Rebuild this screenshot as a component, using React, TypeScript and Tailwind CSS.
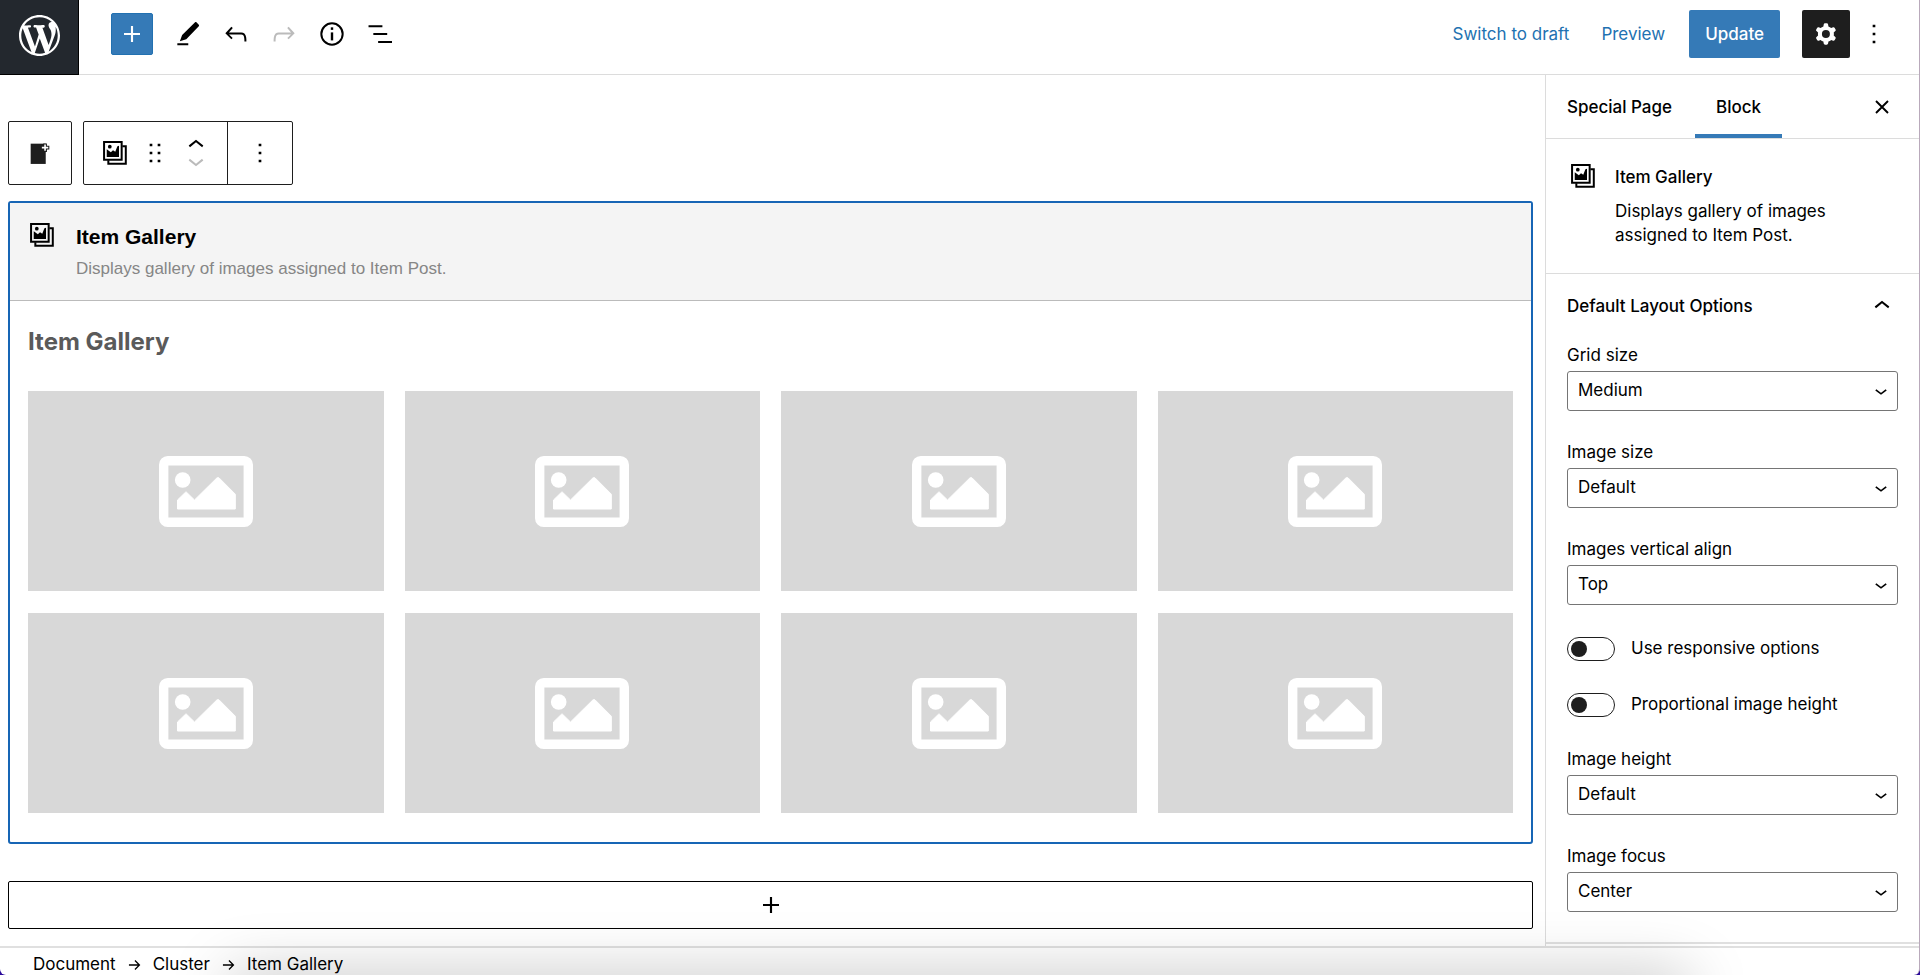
import type { ReactNode } from "react";

type IconProps = { className?: string };

const GalleryIcon = ({ className = "w-8 h-8" }: IconProps) => (
  <svg viewBox="0 0 24 24" className={className} fill="none" aria-hidden="true">
    <path d="M3.8 3.8h13.2v13.2H3.8z" stroke="currentColor" strokeWidth="1.5" />
    <path d="M17.5 7h2.6v13.1H7v-2.6" stroke="currentColor" strokeWidth="1.5" />
    <path d="M5.8 9.2v5.8h9.2V6.6l-1.2.4-1.6 4-1.7-1-1.6 1.5z" fill="currentColor" />
    <circle cx="8.1" cy="7.3" r="1.4" fill="currentColor" />
  </svg>
);

const PlusIcon = ({ className = "w-8 h-8" }: IconProps) => (
  <svg viewBox="0 0 24 24" className={className} fill="currentColor" aria-hidden="true">
    <path d="M18 11.2h-5.2V6h-1.6v5.2H6v1.6h5.2V18h1.6v-5.2H18z" />
  </svg>
);

const ChevronIcon = ({ className = "w-8 h-8" }: IconProps) => (
  <svg viewBox="0 0 24 24" className={className} fill="currentColor" aria-hidden="true">
    <path d="M6.5 12.4 12 8l5.5 4.4-.9 1.2L12 10l-4.5 3.6z" />
  </svg>
);

const MoreIcon = () => (
  <svg viewBox="0 0 24 24" className="w-8 h-8" fill="currentColor" aria-hidden="true">
    <path d="M13 19h-2v-2h2v2zm0-6h-2v-2h2v2zm0-6h-2V5h2v2z" />
  </svg>
);

const UndoIcon = ({ className = "w-8 h-8" }: IconProps) => (
  <svg viewBox="0 0 24 24" className={className} fill="currentColor" aria-hidden="true">
    <path d="M18.3 11.7c-.6-.6-1.4-.9-2.3-.9H6.7l2.9-3.3-1.1-1-4.5 5L8.5 16l1-1-2.7-2.7H16c.5 0 .9.2 1.3.5 1 1 1 3.4 1 4.5v.3h1.5v-.2c0-1.5 0-4.3-1.5-5.7z" />
  </svg>
);

const PlaceholderIcon = () => (
  <svg viewBox="0 0 94 71" className="w-[94px] h-[71px]" fill="none" aria-hidden="true">
    <rect x="4.7" y="4.7" width="84.6" height="61.6" rx="4" stroke="white" strokeWidth="9.4" />
    <circle cx="23.7" cy="24" r="7.8" fill="white" />
    <path
      d="M18.5 53V44l8-7.8h1l8 7.8L58 21.8h2l16.3 16.4V53z"
      fill="white"
      stroke="white"
      strokeWidth="1"
      strokeLinejoin="round"
    />
  </svg>
);

const ArrowIcon = () => (
  <svg viewBox="0 0 14 12" className="w-[13px] h-3" fill="none" stroke="currentColor" strokeWidth="1.4" aria-hidden="true">
    <path d="M1 6h11M7.5 1.2 12.3 6l-4.8 4.8" />
  </svg>
);

const tools: { label: string; icon: ReactNode; disabled?: boolean }[] = [
  {
    label: "Tools",
    icon: (
      <svg viewBox="0 0 24 24" className="w-8 h-8" fill="currentColor">
        <path d="m20.1 5.1-1.8-1.9c-.3-.3-.7-.3-1 0L7.6 12.7 5.9 17.5l4.8-1.6 9.4-9.8c.3-.3.3-.7 0-1zM4 18.9h8.2v1.5H4z" />
      </svg>
    ),
  },
  { label: "Undo", icon: <UndoIcon /> },
  { label: "Redo", icon: <UndoIcon className="w-8 h-8 -scale-x-100" />, disabled: true },
  {
    label: "Details",
    icon: (
      <svg viewBox="0 0 24 24" className="w-8 h-8" fill="none" stroke="currentColor">
        <circle cx="12" cy="12" r="8" strokeWidth="1.5" />
        <path d="M12 10.8v6" strokeWidth="1.8" />
        <path d="M12 7v1.9" strokeWidth="1.8" />
      </svg>
    ),
  },
  {
    label: "List view",
    icon: (
      <svg viewBox="0 0 24 24" className="w-8 h-8" fill="currentColor">
        <path d="M3.4 5.4h10.4v1.5H3.4zM7 11.2h10.4v1.5H7zM10.6 17.2h10.4v1.5H10.6z" />
      </svg>
    ),
  },
];

function SelectField({ id, label, value }: { id: string; label: string; value: string }) {
  return (
    <div>
      <label htmlFor={id} className="block leading-6 mb-1">
        {label}
      </label>
      <div className="relative">
        <select
          id={id}
          defaultValue={value}
          className="appearance-none w-full h-10 pl-[10px] pr-9 border border-[#757575] rounded-[3px] bg-white"
        >
          <option>{value}</option>
        </select>
        <svg
          viewBox="0 0 12 6"
          className="absolute right-[11px] top-[18px] w-3 h-[6px] pointer-events-none"
          fill="none"
          stroke="currentColor"
          strokeWidth="1.7"
          aria-hidden="true"
        >
          <path d="M.8.8 6 4.8 11.2.8" />
        </svg>
      </div>
    </div>
  );
}

function Toggle({ label }: { label: string }) {
  return (
    <label className="flex items-center gap-4 h-6">
      <span className="relative flex w-12 h-6">
        <input
          type="checkbox"
          className="peer appearance-none w-12 h-6 rounded-full border border-[#1e1e1e] bg-white"
        />
        <span className="absolute left-1 top-1 w-4 h-4 rounded-full bg-[#1e1e1e] peer-checked:translate-x-6" />
      </span>
      {label}
    </label>
  );
}

export default function App() {
  return (
    <div className="h-screen bg-[#2a0a9a] text-[17px] text-black font-['Inter',sans-serif] overflow-hidden">
      <div className="relative h-full flex flex-col bg-white border-r border-[#b9a9bb] rounded-b-md overflow-hidden">
        {/* Top bar */}
        <header className="flex items-stretch h-[75px] shrink-0 border-b border-[#dcdcdc]">
          <a
            href="#"
            aria-label="View pages"
            className="flex items-center justify-center w-[79px] h-[75px] pb-1 bg-[#23282e] border-b border-r border-black text-white"
          >
            <svg viewBox="0 0 20 20" className="w-[41px] h-[41px]" fill="currentColor">
              <path d="M20 10c0-5.51-4.49-10-10-10C4.48 0 0 4.49 0 10c0 5.52 4.48 10 10 10 5.51 0 10-4.48 10-10zM7.78 15.37L4.37 6.22c.55-.02 1.17-.08 1.17-.08.5-.06.44-1.13-.06-1.11 0 0-1.45.11-2.37.11-.18 0-.37 0-.58-.01C4.12 2.69 6.87 1.11 10 1.11c2.33 0 4.45.87 6.05 2.34-.68-.11-1.65.39-1.65 1.58 0 .74.45 1.36.9 2.1.35.61.55 1.36.55 2.46 0 1.49-1.4 5-1.4 5l-3.03-8.37c.54-.02.82-.17.82-.17.5-.05.44-1.25-.06-1.22 0 0-1.44.12-2.38.12-.87 0-2.33-.12-2.33-.12-.5-.03-.56 1.2-.06 1.22l.92.08 1.26 3.41zM17.41 10c.24-.64.74-1.87.43-4.25.7 1.29 1.05 2.71 1.05 4.25 0 3.29-1.73 6.24-4.4 7.78.97-2.59 1.94-5.2 2.92-7.78zM6.1 18.09C3.12 16.65 1.11 13.53 1.11 10c0-1.3.23-2.48.72-3.59C3.25 10.3 4.67 14.2 6.1 18.09zm4.03-6.63l2.58 6.98c-.86.29-1.76.45-2.71.45-.79 0-1.57-.11-2.29-.33.81-2.38 1.62-4.74 2.42-7.1z" />
            </svg>
          </a>
          <div className="flex items-center h-[68px] pl-8">
            <button
              aria-label="Add block"
              className="flex items-center justify-center w-[42px] h-[42px] mr-[11px] rounded-xs bg-[#357ab7] border border-[#2271b1] text-white"
            >
              <PlusIcon />
            </button>
            {tools.map(({ label, icon, disabled }) => (
              <button
                key={label}
                aria-label={label}
                disabled={disabled}
                className="flex items-center justify-center w-12 h-12 disabled:text-[#bbb]"
              >
                {icon}
              </button>
            ))}
          </div>
          <div className="flex items-center h-[68px] ml-auto pr-[29px]">
            <button className="mr-8 pt-[2px] text-[#2271b1]">Switch to draft</button>
            <button className="mr-6 pt-[2px] text-[#2271b1]">Preview</button>
            <button className="h-12 px-4 pt-[2px] mr-[22px] rounded-xs bg-[#357ab7] text-white font-medium">
              Update
            </button>
            <button
              aria-label="Settings"
              className="flex items-center justify-center w-12 h-12 mr-2 rounded-xs bg-[#1e1e1e] text-white"
            >
              <svg viewBox="0 0 24 24" className="w-8 h-8" fill="currentColor">
                <path
                  fillRule="evenodd"
                  d="M10.289 4.836A1 1 0 0111.275 4h1.306a1 1 0 01.987.836l.244 1.466c.787.26 1.503.679 2.108 1.218l1.393-.522a1 1 0 011.216.437l.653 1.13a1 1 0 01-.23 1.273l-1.148.944a6.025 6.025 0 010 2.435l1.149.946a1 1 0 01.23 1.272l-.653 1.13a1 1 0 01-1.216.437l-1.394-.522c-.605.54-1.32.958-2.108 1.218l-.244 1.466a1 1 0 01-.987.836h-1.306a1 1 0 01-.986-.836l-.244-1.466a5.995 5.995 0 01-2.108-1.218l-1.394.522a1 1 0 01-1.217-.436l-.653-1.131a1 1 0 01.23-1.272l1.149-.946a6.026 6.026 0 010-2.435l-1.148-.944a1 1 0 01-.23-1.272l.653-1.131a1 1 0 011.217-.437l1.393.522a5.994 5.994 0 012.108-1.218l.244-1.466zM14.929 12a3 3 0 11-6 0 3 3 0 016 0z"
                />
              </svg>
            </button>
            <button aria-label="Options" className="flex items-center justify-center w-8 h-12">
              <MoreIcon />
            </button>
          </div>
        </header>

        <div className="flex flex-1 min-h-0">
          {/* Canvas */}
          <main className="flex-1 min-w-0 px-2 pr-3 pt-[46px] overflow-hidden">
            <div className="flex gap-[11px] h-16">
              <button
                aria-label="Select parent block"
                className="flex items-center justify-center w-16 border border-[#1e1e1e] rounded-xs"
              >
                <svg viewBox="0 0 24 24" className="w-8 h-8" fill="none">
                  <path d="M5 5h11.3v15.2H5z" fill="#1e1e1e" />
                  <path d="M15.8 4.8v6.4M12.6 8h6.4" stroke="#1e1e1e" strokeWidth="2.8" />
                  <path d="M15.8 5.6v4.8M13.4 8h4.8" stroke="white" strokeWidth="1.2" />
                </svg>
              </button>
              <div className="flex border border-[#1e1e1e] rounded-xs">
                <div className="flex items-center w-36 pl-[15px] border-r border-[#1e1e1e]">
                  <button aria-label="Item Gallery">
                    <GalleryIcon />
                  </button>
                  <button aria-label="Drag" className="ml-2">
                    <svg viewBox="0 0 24 24" className="w-8 h-8" fill="currentColor">
                      <path d="M8 5h2v2H8zm6 0h2v2h-2zM8 11h2v2H8zm6 0h2v2h-2zM8 17h2v2H8zm6 0h2v2h-2z" />
                    </svg>
                  </button>
                  <div className="flex flex-col items-center ml-[9px]">
                    <button aria-label="Move up" className="h-5 overflow-hidden">
                      <ChevronIcon className="w-8 h-8 -mt-1" />
                    </button>
                    <button aria-label="Move down" disabled className="h-5 overflow-hidden text-[#bbb]">
                      <ChevronIcon className="w-8 h-8 -mt-2 rotate-180" />
                    </button>
                  </div>
                </div>
                <button aria-label="Options" className="flex items-center justify-center w-16">
                  <MoreIcon />
                </button>
              </div>
            </div>

            {/* Selected block */}
            <section className="mt-4 border-2 border-[#1765b5] rounded-[3px]">
              <div className="flex h-[98px] pt-4 pl-4 bg-[#f4f4f4] border-b border-[#bbb]">
                <GalleryIcon className="w-8 h-8 shrink-0" />
                <div className="ml-[18px] pt-[2px] font-['Liberation_Sans',sans-serif]">
                  <h2 className="text-[21px] leading-8 font-bold">Item Gallery</h2>
                  <p className="leading-8 text-[#868686]">Displays gallery of images assigned to Item Post.</p>
                </div>
              </div>
              <div className="px-[18px] pt-[23px] pb-[29px]">
                <h3 className="mb-[31px] text-2xl leading-9 font-bold text-[#5a5a5a]">Item Gallery</h3>
                <div className="grid grid-cols-4 gap-x-[21px] gap-y-[22px]">
                  {Array.from({ length: 8 }, (_, i) => (
                    <div key={i} className="flex items-center justify-center h-[200px] bg-[#d8d8d8]">
                      <PlaceholderIcon />
                    </div>
                  ))}
                </div>
              </div>
            </section>

            <button
              aria-label="Add block"
              className="flex items-center justify-center w-full h-12 mt-[37px] border border-black rounded-xs"
            >
              <PlusIcon />
            </button>
          </main>

          {/* Settings sidebar */}
          <aside className="w-[374px] shrink-0 border-l border-[#dcdcdc] overflow-hidden">
            <div className="flex items-stretch gap-[2px] h-16 border-b border-[#dcdcdc] font-medium">
              <button className="px-[21px] pt-[2px]">Special Page</button>
              <button className="px-[21px] pt-[6px] border-b-4 border-[#357ab7]">Block</button>
              <button aria-label="Close settings" className="ml-auto mr-[29px]">
                <svg viewBox="0 0 16 16" className="w-4 h-4" fill="none" stroke="currentColor" strokeWidth="1.9">
                  <path d="m2 2 12 12M14 2 2 14" />
                </svg>
              </button>
            </div>
            <div className="flex h-[135px] px-[21px] pt-[21px] border-b border-[#dcdcdc]">
              <GalleryIcon className="w-8 h-8 shrink-0" />
              <div className="ml-4 pt-[5px]">
                <h2 className="font-medium leading-6">Item Gallery</h2>
                <p className="mt-[10px] leading-6 w-[240px]">Displays gallery of images assigned to Item Post.</p>
              </div>
            </div>
            <div className="px-[21px] pb-[30px] border-b-2 border-[#e0e0e0]">
              <button className="flex items-center justify-between w-full h-[66px] font-medium">
                Default Layout Options
                <ChevronIcon className="w-8 h-8 -mt-[2px]" />
              </button>
              <div className="flex flex-col gap-[29px] pt-[3px]">
                <SelectField id="grid-size" label="Grid size" value="Medium" />
                <SelectField id="image-size" label="Image size" value="Default" />
                <SelectField id="vertical-align" label="Images vertical align" value="Top" />
              </div>
              <div className="flex flex-col gap-8 mt-8 mb-[30px]">
                <Toggle label="Use responsive options" />
                <Toggle label="Proportional image height" />
              </div>
              <div className="flex flex-col gap-[29px]">
                <SelectField id="image-height" label="Image height" value="Default" />
                <SelectField id="image-focus" label="Image focus" value="Center" />
              </div>
            </div>
          </aside>
        </div>

        {/* Breadcrumb */}
        <nav aria-label="Block breadcrumb" className="h-[29px] shrink-0 border-t-2 border-[#e0e0e0]">
          <ol className="flex items-center gap-3 h-[34px] pl-[33px]">
            <li>
              <button>Document</button>
            </li>
            <li aria-hidden="true">
              <ArrowIcon />
            </li>
            <li>
              <button>Cluster</button>
            </li>
            <li aria-hidden="true">
              <ArrowIcon />
            </li>
            <li>Item Gallery</li>
          </ol>
        </nav>

        {/* Soft shadow rising from the bottom edge */}
        <div className="absolute left-[230px] right-[230px] -bottom-10 h-10 pointer-events-none shadow-[0_0_60px_rgba(0,0,0,0.25)]" />
      </div>
    </div>
  );
}
